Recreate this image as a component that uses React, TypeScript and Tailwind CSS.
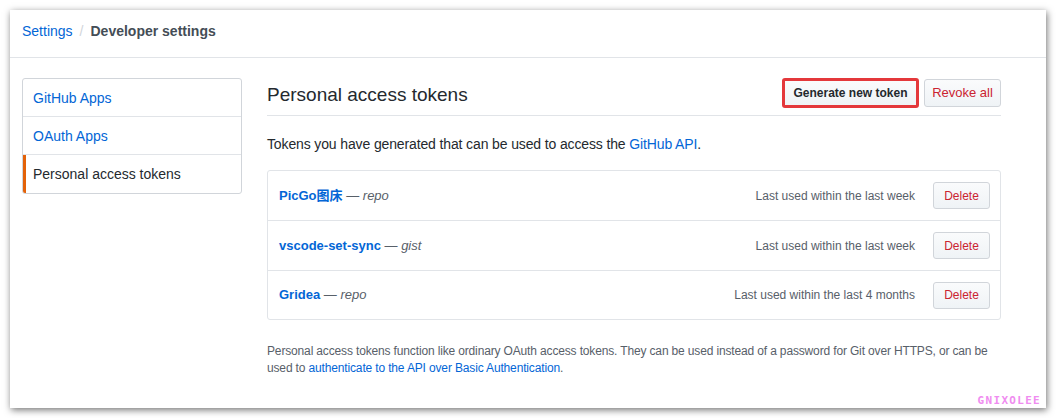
import React from "react";

type Token = { name: string; scope: string; lastUsed: string };

const tokens: Token[] = [
  { name: "PicGo图床", scope: "repo", lastUsed: "Last used within the last week" },
  { name: "vscode-set-sync", scope: "gist", lastUsed: "Last used within the last week" },
  { name: "Gridea", scope: "repo", lastUsed: "Last used within the last 4 months" },
];

const font = "font-['Liberation_Sans','Noto_Sans_CJK_SC',sans-serif]";

const btn =
  "flex items-center justify-center rounded-[3px] border border-[#d1d5da] bg-gradient-to-b from-[#fafbfc] to-[#eff3f6] text-xs";

const SideItem = ({ label, active }: { label: string; active?: boolean }) => (
  <div
    className={`flex h-[38px] items-center border-b border-[#e1e4e8] text-sm last:border-b-0 ${
      active ? "border-l-[3px] border-l-[#e36209] pl-[7px] text-[#24292e]" : "pl-[10px] text-[#0366d6]"
    }`}>
    {label}
  </div>
);

const TokenRow = ({ token }: { token: Token }) => (
  <div className="flex h-[50px] items-center border-b border-[#e1e4e8] pl-[11px] pr-[10px] last:h-[48px] last:border-b-0">
    <div className="flex-1 text-[13px]">
      <span className="font-bold text-[#0366d6]">{token.name}</span>
      <span className="text-[#586069]"> — </span>
      <em className="text-[#586069]">{token.scope}</em>
    </div>
    <span className="mr-[18px] text-xs text-[#586069]">{token.lastUsed}</span>
    <button className={`${btn} h-[27px] w-[57px] text-[#cb2431]`}>Delete</button>
  </div>
);

export default function App() {
  return (
    <div className={`${font} h-[418px] w-[1056px] bg-white p-[10px]`}>
      <div className="relative h-[398px] w-[1036px] bg-white shadow-[1px_2px_7px_rgba(0,0,0,0.55)]">
        <div className="flex h-[48px] items-start border-b border-[#e1e4e8] pl-[12px] pt-[11px] text-sm leading-[20px]">
          <span className="text-[#0366d6]">Settings</span>
          <span className="mx-[7px] text-[#d1d5da]">/</span>
          <span className="font-semibold text-[#444d56]">Developer settings</span>
        </div>

        <div className="flex gap-[25px] pl-[12px] pt-[20px]">
          <div className="h-fit w-[220px] overflow-hidden rounded-[3px] border border-[#d1d5da]">
            <SideItem label="GitHub Apps" />
            <SideItem label="OAuth Apps" />
            <SideItem label="Personal access tokens" active />
          </div>

          <div className="w-[734px]">
            <div className="flex h-[38px] items-start justify-between border-b border-[#e1e4e8]">
              <h2 className="pt-[3px] text-[19px] leading-[28px] text-[#24292e]">Personal access tokens</h2>
              <div className="flex gap-[5px] pt-px">
                <button
                  className={`${btn} h-[30px] w-[137px] -mt-px border-[3px] border-[#e4383b] font-semibold text-[#24292e]`}>
                  Generate new token
                </button>
                <button className={`${btn} h-[28px] w-[77px] text-[13px] text-[#cb2431]`}>Revoke all</button>
              </div>
            </div>

            <p className="mt-[18px] text-sm leading-[20px] tracking-[-0.13px] text-[#24292e]">
              Tokens you have generated that can be used to access the{" "}
              <span className="text-[#0366d6]">GitHub API</span>.
            </p>

            <div className="mt-[16px] rounded-[3px] border border-[#e1e4e8]">
              {tokens.map((t) => (
                <TokenRow key={t.name} token={t} />
              ))}
            </div>

            <p className="mt-[23px] text-xs leading-[17px] tracking-[-0.15px] text-[#586069]">
              <span className="whitespace-nowrap">
                Personal access tokens function like ordinary OAuth access tokens. They can be used instead of a
                password for Git over HTTPS, or can be
              </span>
              <br />
              used to <span className="text-[#0366d6]">authenticate to the API over Basic Authentication</span>.
            </p>
          </div>
        </div>

        <span className="absolute bottom-[2px] right-[5px] font-['DejaVu_Sans_Mono',monospace] text-[11px] font-bold leading-none tracking-[1.3px] text-[#f08cf0]">
          GNIXOLEE
        </span>
      </div>
    </div>
  );
}
